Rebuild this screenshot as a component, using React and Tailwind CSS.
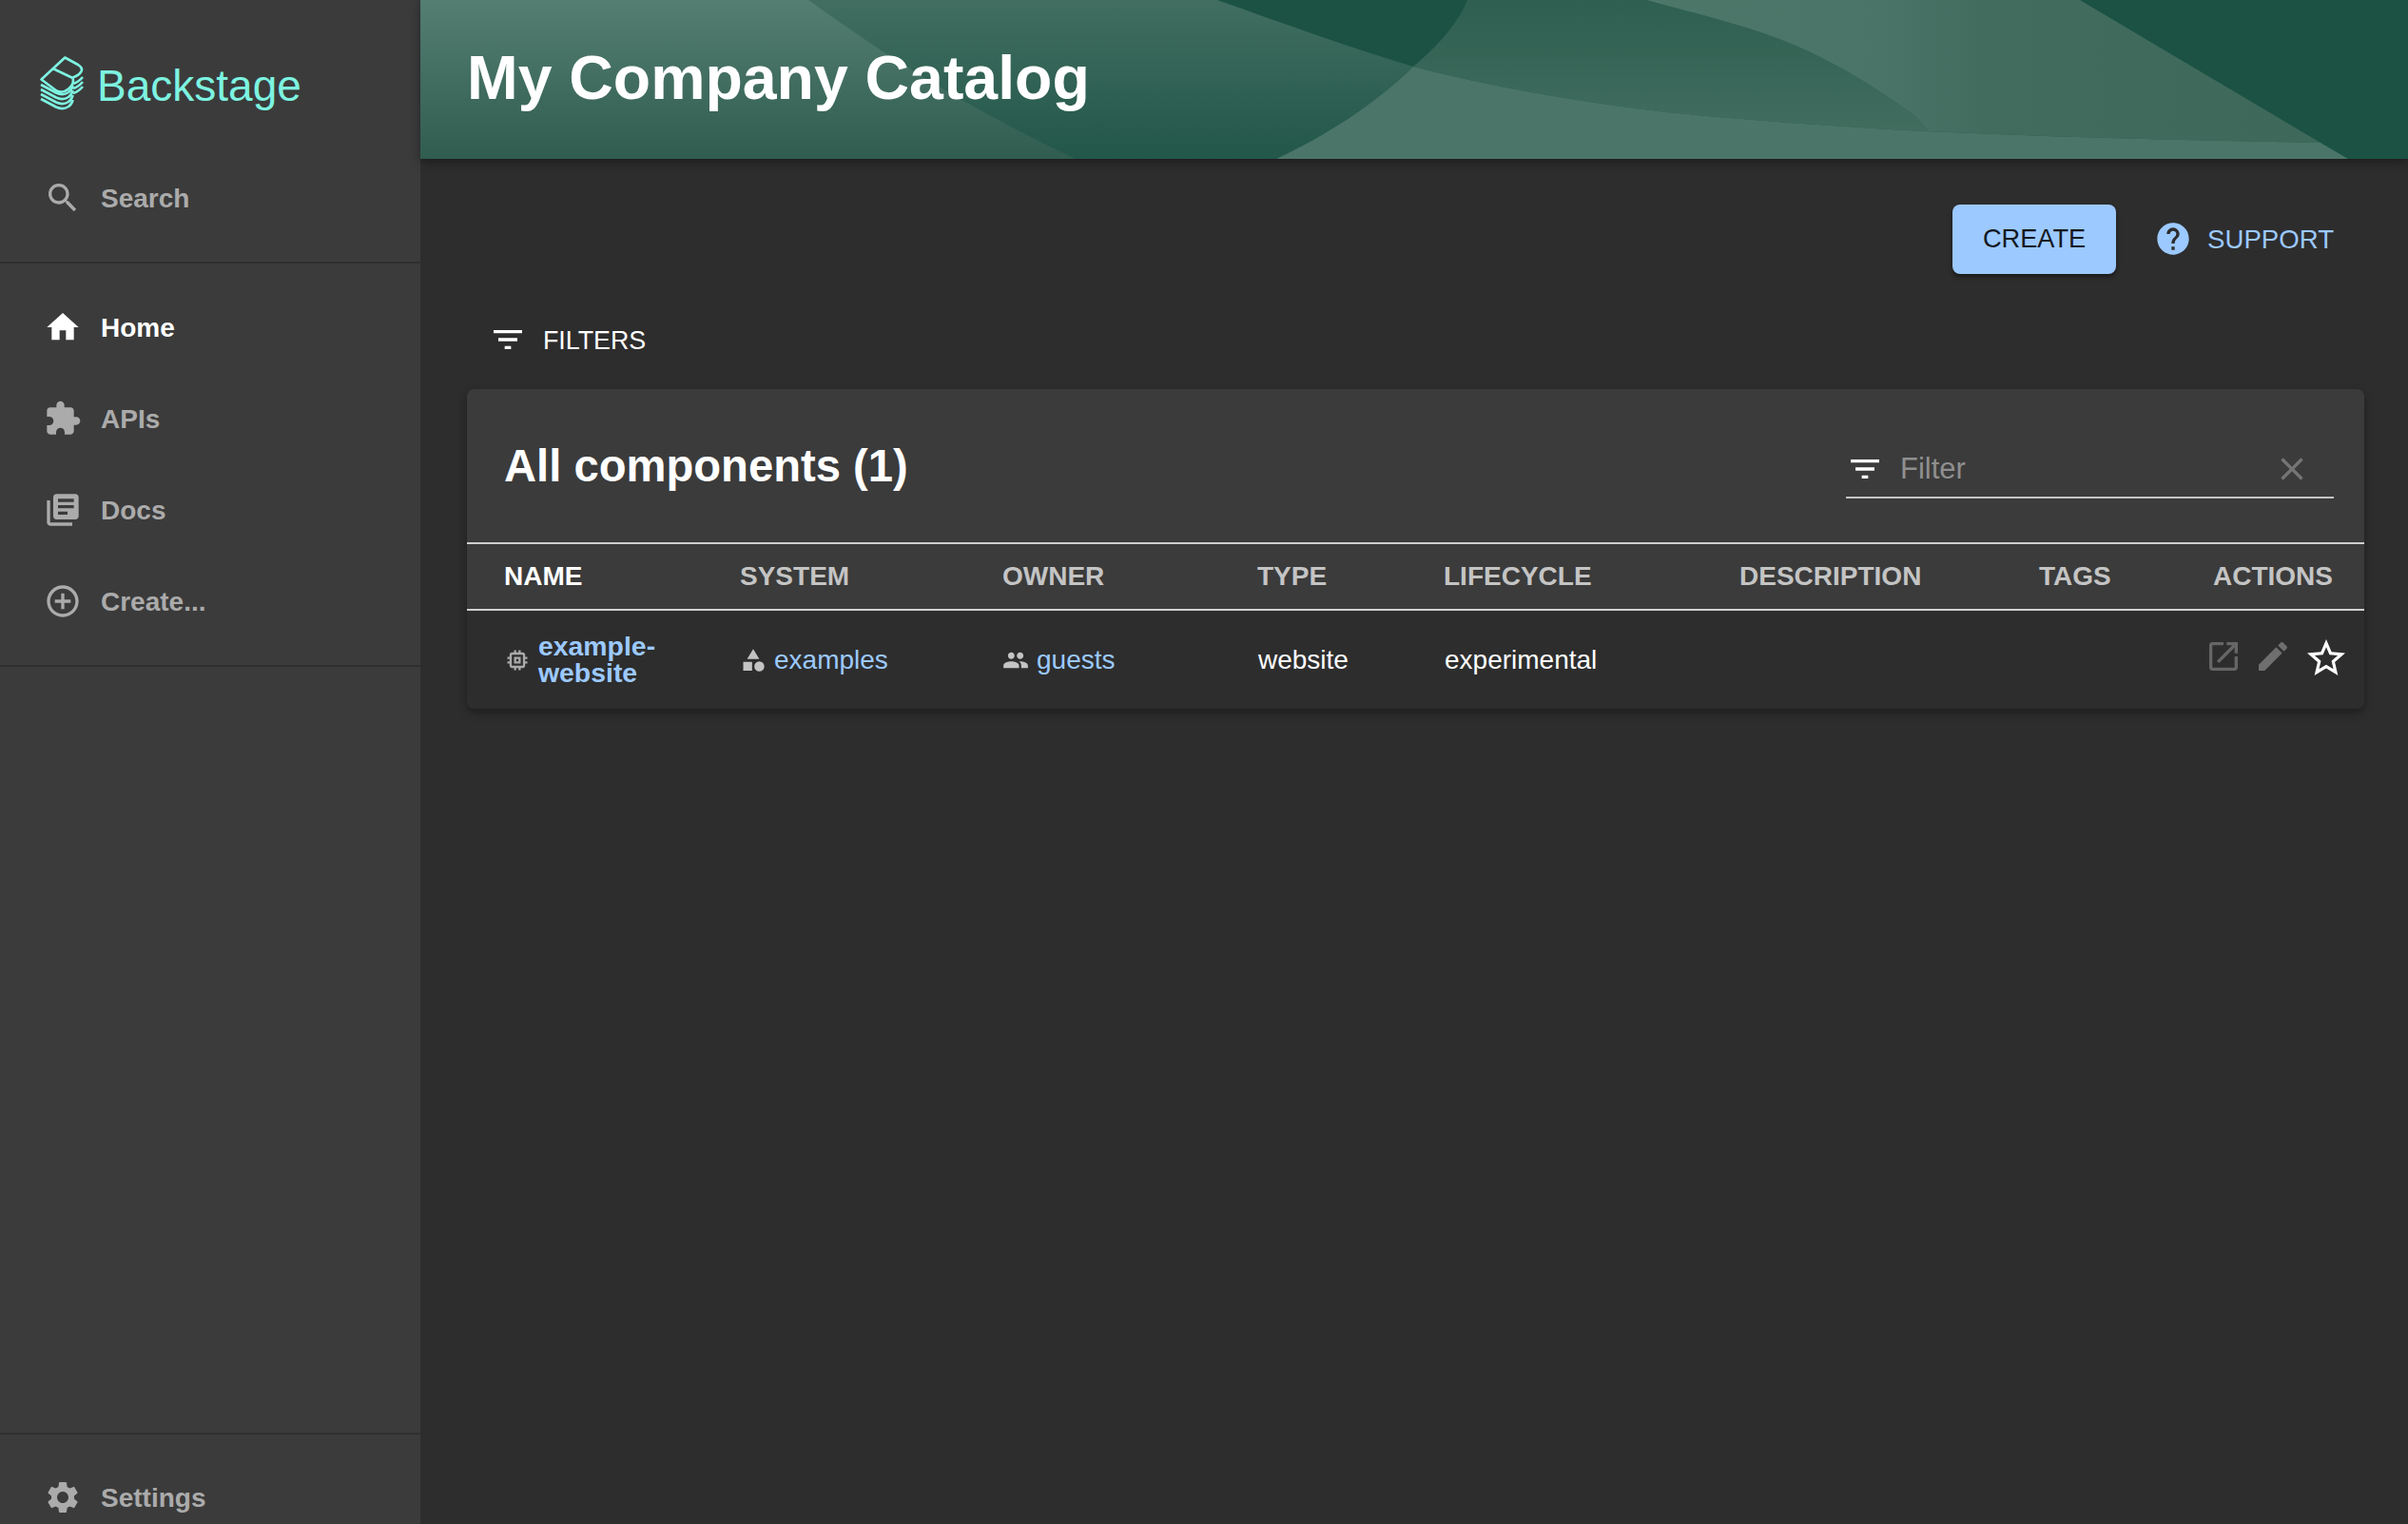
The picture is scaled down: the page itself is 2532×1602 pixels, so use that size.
const paths = {
  search: 'M15.5 14h-.79l-.28-.27C15.41 12.59 16 11.11 16 9.5 16 5.91 13.09 3 9.5 3S3 5.91 3 9.5 5.91 16 9.5 16c1.61 0 3.09-.59 4.23-1.57l.27.28v.79l5 4.99L20.49 19l-4.99-5zm-6 0C7.01 14 5 11.99 5 9.5S7.01 5 9.5 5 14 7.01 14 9.5 11.99 14 9.5 14z',
  home: 'M10 20v-6h4v6h5v-8h3L12 3 2 12h3v8z',
  extension: 'M20.5 11H19V7c0-1.1-.9-2-2-2h-4V3.5C13 2.12 11.88 1 10.5 1S8 2.12 8 3.5V5H4c-1.1 0-1.99.9-1.99 2v3.8H3.5c1.49 0 2.7 1.21 2.7 2.7s-1.21 2.7-2.7 2.7H2V20c0 1.1.9 2 2 2h3.8v-1.5c0-1.49 1.21-2.7 2.7-2.7 1.49 0 2.7 1.21 2.7 2.7V22H17c1.1 0 2-.9 2-2v-4h1.5c1.38 0 2.5-1.12 2.5-2.5S21.88 11 20.5 11z',
  docs: 'M4 6H2v14c0 1.1.9 2 2 2h14v-2H4V6zm16-4H8c-1.1 0-2 .9-2 2v12c0 1.1.9 2 2 2h12c1.1 0 2-.9 2-2V4c0-1.1-.9-2-2-2zm-1 9H9V9h10v2zm-4 4H9v-2h6v2zm4-8H9V5h10v2z',
  add: 'M13 7h-2v4H7v2h4v4h2v-4h4v-2h-4V7zm-1-5C6.48 2 2 6.48 2 12s4.48 10 10 10 10-4.48 10-10S17.52 2 12 2zm0 18c-4.41 0-8-3.59-8-8s3.59-8 8-8 8 3.59 8 8-3.59 8-8 8z',
  settings: 'M19.14 12.94c.04-.3.06-.61.06-.94 0-.32-.02-.64-.07-.94l2.03-1.58c.18-.14.23-.41.12-.61l-1.92-3.32c-.12-.22-.37-.29-.59-.22l-2.39.96c-.5-.38-1.03-.7-1.62-.94l-.36-2.54c-.04-.24-.24-.41-.48-.41h-3.84c-.24 0-.43.17-.47.41l-.36 2.54c-.59.24-1.13.57-1.62.94l-2.39-.96c-.22-.08-.47 0-.59.22L2.74 8.87c-.12.21-.08.47.12.61l2.03 1.58c-.05.3-.09.63-.09.94s.02.64.07.94l-2.03 1.58c-.18.14-.23.41-.12.61l1.92 3.32c.12.22.37.29.59.22l2.39-.96c.5.38 1.03.7 1.62.94l.36 2.54c.05.24.24.41.48.41h3.84c.24 0 .44-.17.47-.41l.36-2.54c.59-.24 1.13-.56 1.62-.94l2.39.96c.22.08.47 0 .59-.22l1.92-3.32c.12-.22.07-.47-.12-.61l-2.01-1.58zM12 15.6c-1.98 0-3.6-1.62-3.6-3.6s1.62-3.6 3.6-3.6 3.6 1.62 3.6 3.6-1.62 3.6-3.6 3.6z',
  filter: 'M10 18h4v-2h-4v2zM3 6v2h18V6H3zm3 7h12v-2H6v2z',
  help: 'M12 2C6.48 2 2 6.48 2 12s4.48 10 10 10 10-4.48 10-10S17.52 2 12 2zm1 17h-2v-2h2v2zm2.07-7.75l-.9.92C13.45 12.9 13 13.5 13 15h-2v-.5c0-1.1.45-2.1 1.17-2.83l1.24-1.26c.37-.36.59-.86.59-1.41 0-1.1-.9-2-2-2s-2 .9-2 2H8c0-2.21 1.79-4 4-4s4 1.79 4 4c0 .88-.36 1.68-.93 2.25z',
  clear: 'M19 6.41L17.59 5 12 10.59 6.41 5 5 6.41 10.59 12 5 17.59 6.41 19 12 13.41 17.59 19 19 17.59 13.41 12z',
  open: 'M19 19H5V5h7V3H5c-1.11 0-2 .9-2 2v14c0 1.1.89 2 2 2h14c1.1 0 2-.9 2-2v-7h-2v7zM14 3v2h3.59l-9.83 9.83 1.41 1.41L19 6.41V10h2V3h-7z',
  edit: 'M3 17.25V21h3.75L17.81 9.94l-3.75-3.75L3 17.25zM20.71 7.04c.39-.39.39-1.02 0-1.41l-2.34-2.34c-.39-.39-1.02-.39-1.41 0l-1.83 1.83 3.75 3.75 1.83-1.83z',
  star: 'M22 9.24l-7.19-.62L12 2 9.19 8.63 2 9.24l5.46 4.73L5.82 21 12 17.27 18.18 21l-1.63-7.03L22 9.24zM12 15.4l-3.76 2.27 1-4.28-3.32-2.88 4.38-.38L12 6.1l1.71 4.04 4.38.38-3.32 2.88 1 4.28L12 15.4z',
  group: 'M16 11c1.66 0 2.99-1.34 2.99-3S17.66 5 16 5c-1.66 0-3 1.34-3 3s1.34 3 3 3zm-8 0c1.66 0 2.99-1.34 2.99-3S9.66 5 8 5C6.34 5 5 6.34 5 8s1.34 3 3 3zm0 2c-2.33 0-7 1.17-7 3.5V19h14v-2.5c0-2.33-4.67-3.5-7-3.5zm8 0c-.29 0-.62.02-.97.05 1.16.84 1.97 1.97 1.97 3.45V19h6v-2.5c0-2.33-4.67-3.5-7-3.5z',
  category: 'M12 2l-5.5 9h11zM3 13.5h8v8H3zM17.5 13a4.5 4.5 0 1 0 0 9 4.5 4.5 0 0 0 0-9z',
  memory: 'M15 9H9v6h6V9zm-2 4h-2v-2h2v2zm8-2V9h-2V7c0-1.1-.9-2-2-2h-2V3h-2v2h-2V3H9v2H7c-1.1 0-2 .9-2 2v2H3v2h2v2H3v2h2v2c0 1.1.9 2 2 2h2v2h2v-2h2v2h2v-2h2c1.1 0 2-.9 2-2v-2h2v-2h-2v-2h2zm-4 6H7V7h10v10z',
}

function Icon({ name, className }) {
  return (
    <svg viewBox="0 0 24 24" fill="currentColor" className={`shrink-0 ${className}`}>
      <path d={paths[name]} />
    </svg>
  )
}

function Logo() {
  const layers = [5, 10, 15, 20]
  return (
    <svg viewBox="42 58 46 58" fill="none" stroke="#7df3e1" strokeWidth="2.6" strokeLinejoin="round" className="w-[46px] h-[58px] shrink-0">
      <path d="M43.5 83.5L68.3 60.5L82 68Q87.5 71.5 85.5 75Q83 79.5 76.5 81.5Q78.5 88 72 93.5Q66 98.5 59.5 95.5Z" />
      <path d="M55.5 72L76.5 82" />
      {layers.map(dy => (
        <path key={dy} d={`M43 ${84 + dy}L59 ${92.5 + dy}Q66 ${96 + dy} 72 ${92 + dy}Q76 ${89 + dy} 76.5 ${85 + dy}`} />
      ))}
      {[0, 5, 10].map(dy => (
        <path key={dy} d={`M77 ${88 + dy}Q83 ${86 + dy} 87 ${81 + dy}`} />
      ))}
    </svg>
  )
}

function HeaderShapes() {
  return (
    <svg viewBox="442 0 2090 167" preserveAspectRatio="none" className="absolute inset-0 w-full h-full">
      <defs>
        <linearGradient id="g1" x1="0" y1="0" x2="0" y2="1">
          <stop offset="0" stopColor="#416e60" />
          <stop offset="1" stopColor="#22574a" />
        </linearGradient>
        <linearGradient id="g2" x1="0" y1="0" x2="0" y2="1">
          <stop offset="0" stopColor="#547e72" />
          <stop offset="1" stopColor="#305d50" />
        </linearGradient>
        <linearGradient id="g3" x1="0" y1="0" x2="0" y2="1">
          <stop offset="0" stopColor="#2e5f50" />
          <stop offset="1" stopColor="#416d5f" />
        </linearGradient>
        <linearGradient id="g4" x1="0" y1="0" x2="1" y2="0">
          <stop offset="0" stopColor="#4c7769" />
          <stop offset="0.35" stopColor="#4a7467" />
          <stop offset="0.5" stopColor="#416c5e" />
          <stop offset="1" stopColor="#3d685a" />
        </linearGradient>
      </defs>
      <rect x="442" y="0" width="2090" height="167" fill="#1b5243" />
      <path d="M442 0L1280 0C1350 25 1420 50 1486 70C1445 110 1395 142 1342 167L442 167Z" fill="url(#g1)" />
      <path d="M442 0L850 0C920 50 1000 105 1131 167L442 167Z" fill="url(#g2)" />
      <path d="M1543 0C1533 25 1512 48 1486 70C1575 93 1665 108 1753 118C1845 127 1935 133 2027 138C2020 128 2015 122 2008 118C1970 90 1930 66 1886 47C1840 28 1790 16 1731 0Z" fill="url(#g3)" />
      <path d="M1731 0C1790 16 1840 28 1886 47C1930 66 1970 90 2008 118C2015 122 2020 128 2027 138C2160 144 2310 148 2440 150L2187 0Z" fill="url(#g4)" />
      <path d="M1486 70C1575 93 1665 108 1753 118C1845 127 1935 133 2027 138C2160 144 2310 148 2440 150L2469 167L1342 167C1395 142 1445 110 1486 70Z" fill="#4a7568" />
    </svg>
  )
}

function NavItem({ icon, label, active }) {
  return (
    <div className={`flex items-center h-24 pl-[46px] gap-5 text-[28px] font-bold ${active ? 'text-white' : 'text-[#ababab]'}`}>
      <Icon name={icon} className="w-10 h-10" />
      <span className="mt-[2px]">{label}</span>
    </div>
  )
}

const columns = [
  { label: 'NAME', width: 'w-[247px]', color: 'text-white', pad: 'pl-[39px]' },
  { label: 'SYSTEM', width: 'w-[277px]', color: 'text-[#c4c4c4]', pad: 'pl-10' },
  { label: 'OWNER', width: 'w-[267px]', color: 'text-[#c4c4c4]', pad: 'pl-[39px]' },
  { label: 'TYPE', width: 'w-[196px]', color: 'text-[#c4c4c4]', pad: 'pl-10' },
  { label: 'LIFECYCLE', width: 'w-[311px]', color: 'text-[#c4c4c4]', pad: 'pl-10' },
  { label: 'DESCRIPTION', width: 'w-[315px]', color: 'text-[#c4c4c4]', pad: 'pl-10' },
  { label: 'TAGS', width: 'w-[183px]', color: 'text-[#c4c4c4]', pad: 'pl-10' },
  { label: 'ACTIONS', width: 'w-[199px]', color: 'text-[#c4c4c4]', pad: 'pl-10' },
]

function App() {
  return (
    <div className="flex h-screen overflow-hidden bg-[#2d2d2d] font-['Liberation_Sans',Arial,sans-serif] text-white">
      <aside className="flex flex-col w-[442px] shrink-0 bg-[#3b3b3b]">
        <div className="flex h-[160px] pt-[58px] pl-[42px] gap-[14px]">
          <Logo />
          <span className="mt-[4px] text-[46px] leading-[56px] text-[#7df3e1] h-14">Backstage</span>
        </div>
        <NavItem icon="search" label="Search" />
        <div className="mt-[19px] h-0.5 bg-[#2f2f2f]" />
        <div className="py-[19px] border-b-2 border-[#2f2f2f]">
          <NavItem icon="home" label="Home" active />
          <NavItem icon="extension" label="APIs" />
          <NavItem icon="docs" label="Docs" />
          <NavItem icon="add" label="Create..." />
        </div>
        <div className="flex-1" />
        <div className="h-[96px] border-t-2 border-[#2f2f2f] pt-[18px]">
          <NavItem icon="settings" label="Settings" />
        </div>
      </aside>

      <main className="flex-1 min-w-0">
        <header className="relative z-10 flex items-center h-[167px] pl-[49px] pb-0.5 overflow-hidden shadow-[0_3px_10px_rgba(0,0,0,0.4)]">
          <HeaderShapes />
          <h1 className="relative text-[64.4px] font-bold leading-none">My Company Catalog</h1>
        </header>

        <div className="flex justify-end items-center gap-10 mt-12 pr-[78px]">
          <button className="w-[172px] h-[73px] rounded-lg bg-[#9cc9ff] text-[#14181f] text-[27.2px] shadow-[0_3px_5px_rgba(0,0,0,0.45)]">CREATE</button>
          <div className="flex items-center gap-4 text-[#9cc9ff] text-[27.6px]">
            <Icon name="help" className="w-10 h-10" />
            <span>SUPPORT</span>
          </div>
        </div>

        <div className="flex items-center h-12 mt-[45px] mb-7 pl-[72px] gap-[17px] text-[26.8px]">
          <Icon name="filter" className="w-10 h-10" />
          <span className="mt-[2px]">FILTERS</span>
        </div>

        <section className="ml-[49px] mr-[46px] rounded-lg bg-[#3b3b3b] overflow-hidden shadow-[0_4px_10px_rgba(0,0,0,0.35)]">
          <div className="flex justify-between items-center h-[161px] pl-[39px] pr-8">
            <h2 className="text-[47.2px] font-bold leading-none">All components (1)</h2>
            <div className="flex items-center w-[513px] h-[60px] mt-[9px] border-b-2 border-[#c4c4c4] pr-6 gap-[17px]">
              <Icon name="filter" className="w-10 h-10" />
              <input placeholder="Filter" className="flex-1 min-w-0 bg-transparent outline-none text-[31px] placeholder:text-[#8f8f8f]" />
              <Icon name="clear" className="w-10 h-10 text-[#757575]" />
            </div>
          </div>

          <table className="w-full table-fixed border-collapse text-[28px]">
            <colgroup>
              {columns.map(c => <col key={c.label} className={c.width} />)}
            </colgroup>
            <thead>
              <tr className="h-[70px] border-y-2 border-[#d0d0d0]">
                {columns.map(c => (
                  <th key={c.label} className={`${c.pad} text-left font-bold ${c.color}`}>{c.label}</th>
                ))}
              </tr>
            </thead>
            <tbody className="bg-[#2d2d2d]">
              <tr className="h-[104px]">
                <td className="pl-[39px]">
                  <div className="flex items-center gap-2">
                    <Icon name="memory" className="w-7 h-7 text-[#aaaaaa]" />
                    <span className="w-[130px] text-[28.4px] font-bold leading-[27.5px] text-[#9cc9ff]">example-website</span>
                  </div>
                </td>
                <td className="pl-10">
                  <div className="flex items-center gap-2">
                    <Icon name="category" className="w-7 h-7 text-[#c4c4c4]" />
                    <span className="text-[#9cc9ff]">examples</span>
                  </div>
                </td>
                <td className="pl-[39px]">
                  <div className="flex items-center gap-2">
                    <Icon name="group" className="w-7 h-7 text-[#c4c4c4]" />
                    <span className="text-[#9cc9ff]">guests</span>
                  </div>
                </td>
                <td className="pl-[41px]">website</td>
                <td className="pl-[41px]">experimental</td>
                <td />
                <td />
                <td className="pl-[31px]">
                  <div className="flex items-start gap-3 pb-1">
                    <Icon name="open" className="w-10 h-10 mt-[2px] text-[#666666]" />
                    <Icon name="edit" className="w-10 h-10 mt-[2px] text-[#6f6f6f]" />
                    <Icon name="star" className="w-12 h-12 text-white" />
                  </div>
                </td>
              </tr>
            </tbody>
          </table>
        </section>
      </main>
    </div>
  )
}

export default App
